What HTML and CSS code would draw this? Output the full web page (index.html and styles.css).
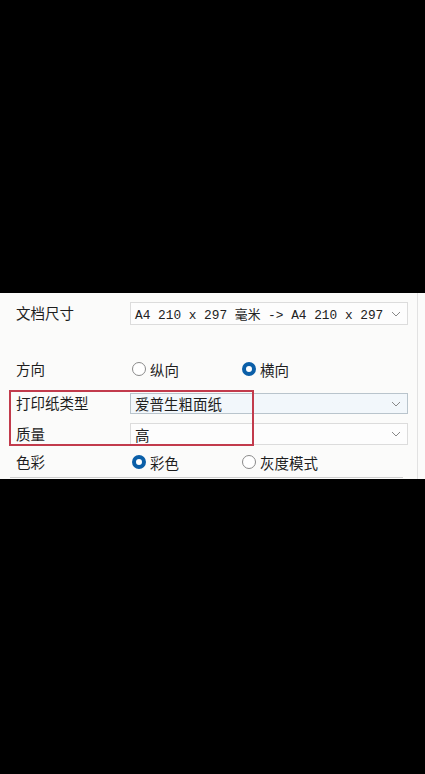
FILE: index.html
```html
<!DOCTYPE html>
<html lang="zh-CN">
<head>
<meta charset="utf-8">
<link rel="stylesheet" href="styles.css">
</head>
<body>
<div class="screen">
  <div class="panel">
    <div class="row r1">
      <div class="label">文档尺寸</div>
      <div class="select mono"><span>A4 210 x 297 毫米 -&gt; A4 210 x 297</span><svg class="chev" viewBox="0 0 10 6"><path d="M1 1 L5 5 L9 1" fill="none" stroke="#888" stroke-width="1"/></svg></div>
    </div>
    <div class="row r2">
      <div class="label">方向</div>
      <div class="radios">
        <div class="radio"><span class="dot"></span><span>纵向</span></div>
        <div class="radio"><span class="dot on"></span><span>横向</span></div>
      </div>
    </div>
    <div class="row r3">
      <div class="label">打印纸类型</div>
      <div class="select focus"><span>爱普生粗面纸</span><svg class="chev" viewBox="0 0 10 6"><path d="M1 1 L5 5 L9 1" fill="none" stroke="#888" stroke-width="1"/></svg></div>
    </div>
    <div class="row r4">
      <div class="label">质量</div>
      <div class="select"><span>高</span><svg class="chev" viewBox="0 0 10 6"><path d="M1 1 L5 5 L9 1" fill="none" stroke="#888" stroke-width="1"/></svg></div>
    </div>
    <div class="row r5">
      <div class="label">色彩</div>
      <div class="radios">
        <div class="radio"><span class="dot on"></span><span>彩色</span></div>
        <div class="radio"><span class="dot"></span><span>灰度模式</span></div>
      </div>
    </div>
    <div class="rule"></div>
    <div class="highlight"></div>
    <div class="vline"></div>
  </div>
</div>
</body>
</html>
```
FILE: styles.css
```css
html, body {
  margin: 0;
  padding: 0;
  background: #000;
}
.screen {
  width: 425px;
  height: 774px;
  background: #000;
  padding-top: 293px;
  box-sizing: border-box;
}
.panel {
  position: relative;
  height: 186px;
  background: #fbfbfa;
  font-family: "Noto Sans CJK SC", "Noto Sans", sans-serif;
  font-size: 14.5px;
  color: #1e1e1e;
  padding-top: 9px;
  box-sizing: border-box;
}
.row {
  display: flex;
  align-items: center;
  padding-left: 16px;
}
.label {
  width: 114px;
  flex: none;
  line-height: 1;
}
.r1 { height: 23px; }
.r2 { height: 22px; margin-top: 33px; }
.r3 { height: 21px; margin-top: 13px; }
.r4 { height: 22px; margin-top: 9px; }
.r5 { height: 20px; margin-top: 7px; }
.select {
  width: 278px;
  height: 100%;
  box-sizing: border-box;
  border: 1px solid #dcdcdc;
  background: #fdfdfd;
  display: flex;
  align-items: center;
  justify-content: space-between;
  padding: 0 6px 0 4px;
  font-size: 14.5px;
}
.select.mono {
  font-family: "Liberation Mono", "Noto Sans CJK SC", monospace;
  font-size: 12.8px;
  color: #222;
}
.select.focus {
  background: #f2f7fb;
  border-color: #b9c4cc;
}
.chev {
  width: 10px;
  height: 6px;
  flex: none;
}
.radios {
  display: flex;
  padding-left: 2px;
}
.radio {
  display: flex;
  align-items: center;
  gap: 4px;
  width: 110px;
}
.dot {
  width: 14px;
  height: 14px;
  box-sizing: border-box;
  border-radius: 50%;
  border: 1px solid #8a8a8a;
  background: #fff;
}
.dot.on {
  border: 4px solid #0b5fa8;
  background: #fff;
}
.rule {
  position: absolute;
  left: 10px;
  right: 22px;
  top: 184px;
  height: 1px;
  background: #cfcfcf;
}
.highlight {
  position: absolute;
  left: 9px;
  top: 97px;
  width: 245px;
  height: 56px;
  box-sizing: border-box;
  border: 2px solid #c23b4c;
}
.vline {
  position: absolute;
  left: 417px;
  top: 0;
  bottom: 0;
  width: 1px;
  background: #e2e2e2;
}
```
